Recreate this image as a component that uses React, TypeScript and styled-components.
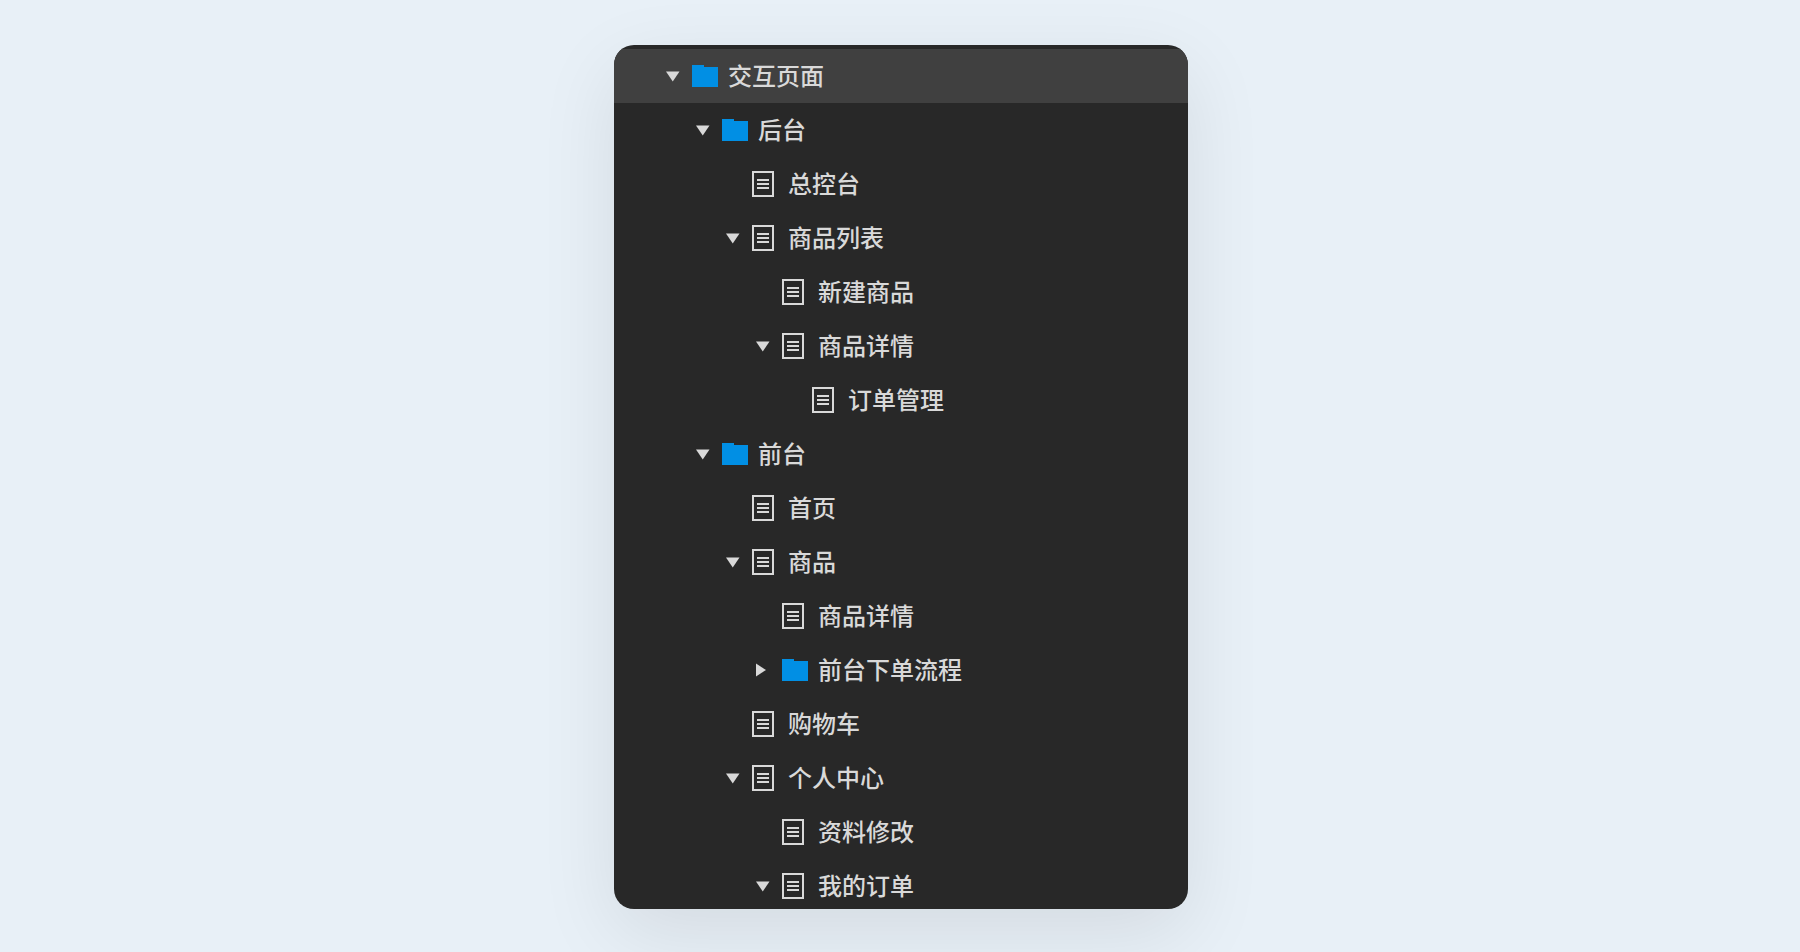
import React, { useState } from "react";
import styled, { createGlobalStyle } from "styled-components";

const GlobalStyle = createGlobalStyle`
  *, *::before, *::after { box-sizing: border-box; }
  body {
    margin: 0;
    background: #e8f0f7;
    font-family: "Noto Sans CJK SC", "Noto Sans", sans-serif;
  }
`;

const Page = styled.main`
  display: flex;
  justify-content: center;
  align-items: flex-start;
  min-height: 100vh;
  padding: 45px 0 43px 2px;
`;

const Panel = styled.nav`
  width: 100%;
  max-width: 574px;
  max-height: calc(100vh - 88px);
  padding-top: 4px;
  overflow: hidden;
  border-radius: 20px;
  background: #282828;
  box-shadow: 0 24px 80px rgba(0, 0, 0, 0.09);
`;

const Tree = styled.ul`
  margin: 0;
  padding: 0;
  list-style: none;
`;

const Row = styled.div<{ $level: number; $selected: boolean }>`
  display: flex;
  align-items: center;
  height: 54px;
  padding-left: ${(p) => 52 + p.$level * 30}px;
  background: ${(p) => (p.$selected ? "#404040" : "transparent")};
`;

const ToggleSlot = styled.span`
  flex: none;
  display: flex;
  width: 26px;
`;

const Toggle = styled.button`
  display: flex;
  width: 14px;
  height: 14px;
  padding: 0;
  border: 0;
  background: none;
  color: #d9d9d9;
  cursor: pointer;
`;

const Label = styled.button`
  display: flex;
  align-items: center;
  padding: 0;
  border: 0;
  background: none;
  color: #d9d9d9;
  font-family: inherit;
  font-size: 24px;
  font-weight: 500;
  line-height: 36px;
  white-space: nowrap;
  cursor: pointer;
`;

const Name = styled.span`
  padding-bottom: 2px;
`;

const IconSlot = styled.span`
  flex: none;
  display: flex;
  width: 36px;
`;

const Arrow = ({ open }: { open: boolean }) => (
  <svg width="14" height="14" viewBox="0 0 14 14" fill="currentColor" aria-hidden="true">
    <path d={open ? "M0 2.5H13.5L6.75 12.5Z" : "M0 .5L10 7L0 13.5Z"} />
  </svg>
);

const FolderIcon = () => (
  <svg width="26" height="22" viewBox="0 0 26 22" aria-hidden="true">
    <path d="M0 0H12V2H26V22H0Z" fill="#018fe4" />
  </svg>
);

const DocIcon = () => (
  <svg width="22" height="26" viewBox="0 0 22 26" aria-hidden="true">
    <rect x="1" y="1" width="20" height="24" fill="none" stroke="#d9d9d9" strokeWidth="2" />
    <path d="M5 8H17V10H5ZM5 12H17V14H5ZM5 16H17V18H5Z" fill="#d9d9d9" />
  </svg>
);

type Node = {
  id: string;
  name: string;
  folder?: boolean;
  collapsed?: boolean;
  children?: Node[];
};

const pages: Node[] = [
  {
    id: "root",
    name: "交互页面",
    folder: true,
    children: [
      {
        id: "admin",
        name: "后台",
        folder: true,
        children: [
          { id: "dashboard", name: "总控台" },
          {
            id: "goods-list",
            name: "商品列表",
            children: [
              { id: "goods-new", name: "新建商品" },
              {
                id: "goods-detail",
                name: "商品详情",
                children: [{ id: "order-admin", name: "订单管理" }],
              },
            ],
          },
        ],
      },
      {
        id: "store",
        name: "前台",
        folder: true,
        children: [
          { id: "home", name: "首页" },
          {
            id: "goods",
            name: "商品",
            children: [
              { id: "store-detail", name: "商品详情" },
              { id: "order-flow", name: "前台下单流程", folder: true, collapsed: true, children: [] },
            ],
          },
          { id: "cart", name: "购物车" },
          {
            id: "profile",
            name: "个人中心",
            children: [
              { id: "profile-edit", name: "资料修改" },
              { id: "my-orders", name: "我的订单", children: [] },
            ],
          },
        ],
      },
    ],
  },
];

type ItemProps = {
  node: Node;
  level: number;
  selected: string;
  onSelect: (id: string) => void;
};

const TreeItem = ({ node, level, selected, onSelect }: ItemProps) => {
  const [open, setOpen] = useState(!node.collapsed);
  return (
    <li>
      <Row $level={level} $selected={selected === node.id}>
        <ToggleSlot>
          {node.children && (
            <Toggle
              type="button"
              aria-expanded={open}
              aria-label={node.name}
              onClick={() => setOpen(!open)}
            >
              <Arrow open={open} />
            </Toggle>
          )}
        </ToggleSlot>
        <Label type="button" onClick={() => onSelect(node.id)}>
          <IconSlot>{node.folder ? <FolderIcon /> : <DocIcon />}</IconSlot>
          <Name>{node.name}</Name>
        </Label>
      </Row>
      {open && node.children && node.children.length > 0 && (
        <Tree>
          {node.children.map((child) => (
            <TreeItem
              key={child.id}
              node={child}
              level={level + 1}
              selected={selected}
              onSelect={onSelect}
            />
          ))}
        </Tree>
      )}
    </li>
  );
};

export default function App() {
  const [selected, setSelected] = useState("root");
  return (
    <>
      <GlobalStyle />
      <Page>
        <Panel aria-label="页面">
          <Tree>
            {pages.map((node) => (
              <TreeItem
                key={node.id}
                node={node}
                level={0}
                selected={selected}
                onSelect={setSelected}
              />
            ))}
          </Tree>
        </Panel>
      </Page>
    </>
  );
}
